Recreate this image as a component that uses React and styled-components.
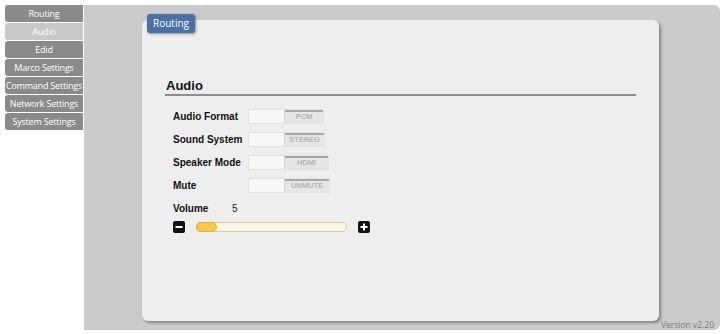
import React from 'react';
import styled, { createGlobalStyle } from 'styled-components';

const Global = createGlobalStyle`
  html, body { margin: 0; padding: 0; background: #ffffff; }
  body { font-family: "Liberation Sans", Arial, sans-serif; }
`;

const Page = styled.div`
  width: 725px;
  height: 334px;
  display: flex;
  align-items: flex-start;
  padding: 5px 0 0 5px;
  box-sizing: border-box;
`;

const Menu = styled.div`
  width: 78px;
  display: flex;
  flex-direction: column;
  gap: 1px;
`;

const MenuItem = styled.div`
  height: 17px;
  line-height: 17px;
  text-align: center;
  font-family: "Open Sans", "DejaVu Sans", sans-serif;
  font-size: 9px;
  color: #ffffff;
  background: ${p => (p.active ? '#c9c9c9' : '#8a8a8a')};
  border-radius: 3px 0 0 3px;
  white-space: nowrap;
  overflow: hidden;
  letter-spacing: -0.2px;
`;

const Stage = styled.div`
  margin-left: 1px;
  width: 636px;
  height: 325px;
  background: #cbcbcb;
  border-radius: 0 6px 6px 0;
  padding: 15px 0 0 58px;
  box-sizing: border-box;
  display: flex;
  flex-direction: column;
  position: relative;
`;

const Panel = styled.div`
  width: 517px;
  height: 301px;
  background: #eeeeee;
  border-radius: 6px;
  box-shadow: 2px 2px 3px rgba(0, 0, 0, 0.35);
  position: relative;
  padding: 58px 23px 0 23px;
  box-sizing: border-box;
`;

const Tab = styled.div`
  position: absolute;
  left: 5px;
  top: -6px;
  height: 19px;
  padding: 0 6px;
  line-height: 18px;
  background: #4b70a6;
  color: #ffffff;
  font-family: "Open Sans", "DejaVu Sans", sans-serif;
  font-size: 10px;
  border-radius: 3px;
  box-shadow: 1px 1px 3px rgba(0, 0, 0, 0.4);
`;

const Heading = styled.div`
  font-weight: bold;
  font-size: 13px;
  color: #111;
  padding-bottom: 1px;
  padding-left: 1px;
  border-bottom: 2px solid #8e8e8e;
`;

const Rows = styled.div`
  margin-top: 13px;
  margin-left: 8px;
  display: flex;
  flex-direction: column;
  gap: 9px;
`;

const Row = styled.div`
  display: flex;
  align-items: center;
  height: 14px;
`;

const Label = styled.div`
  width: ${p => p.w || 75}px;
  font-weight: bold;
  font-size: 10px;
  color: #111;
  white-space: nowrap;
`;

const Toggle = styled.div`
  display: flex;
  width: ${p => p.w}px;
  height: 13px;
  border: 1px solid #e3e3e3;
  background: #f7f7f7;
`;

const ToggleBlank = styled.div`
  width: 35px;
  border-right: 1px solid #d6d6d6;
`;

const ToggleValue = styled.div`
  flex: 1;
  background: #e6e6e6;
  border-top: 2px solid #a8a8a8;
  box-sizing: border-box;
  color: #b5b5b5;
  font-weight: bold;
  font-size: 7.5px;
  line-height: 10px;
  text-align: center;
`;

const VolumeRow = styled.div`
  display: flex;
  align-items: center;
  font-size: 10px;
  color: #111;
  margin-top: 2px;
`;

const VolValue = styled.span`
  color: #222;
`;

const SliderRow = styled.div`
  display: flex;
  align-items: center;
  margin-top: 7px;
  margin-left: 8px;
  gap: 11px;
`;

const IconBtn = styled.div`
  width: 12px;
  height: 12px;
  background: #111;
  border-radius: 2px;
  display: flex;
  align-items: center;
  justify-content: center;
`;

const Track = styled.div`
  width: 149px;
  height: 8px;
  border: 1px solid #d8c9a0;
  background: #fdf8e4;
  border-radius: 5px;
  position: relative;
`;

const Thumb = styled.div`
  position: absolute;
  left: -1px;
  top: -1px;
  width: 19px;
  height: 8px;
  background: #f8c84a;
  border: 1px solid #e3ad2e;
  border-radius: 5px;
`;

const Version = styled.div`
  position: absolute;
  right: 6px;
  bottom: 0px;
  font-family: "Open Sans", "DejaVu Sans", sans-serif;
  font-size: 8.5px;
  color: #7a7a7a;
`;

const menu = ['Routing', 'Audio', 'Edid', 'Marco Settings', 'Command Settings', 'Network Settings', 'System Settings'];

const rows = [
  { label: 'Audio Format', value: 'PCM', w: 74 },
  { label: 'Sound System', value: 'STEREO', w: 75 },
  { label: 'Speaker Mode', value: 'HDMI', w: 79 },
  { label: 'Mute', value: 'UNMUTE', w: 80 },
];

const App = () => {
  return (
    <>
      <Global />
      <Page>
        <Menu>
          {menu.map(m => (
            <MenuItem key={m} active={m === 'Audio'}>{m}</MenuItem>
          ))}
        </Menu>
        <Stage>
          <Panel>
            <Tab>Routing</Tab>
            <Heading>Audio</Heading>
            <Rows>
              {rows.map(r => (
                <Row key={r.label}>
                  <Label>{r.label}</Label>
                  <Toggle w={r.w}>
                    <ToggleBlank />
                    <ToggleValue>{r.value}</ToggleValue>
                  </Toggle>
                </Row>
              ))}
              <VolumeRow>
                <Label w={59}>Volume</Label>
                <VolValue>5</VolValue>
              </VolumeRow>
            </Rows>
            <SliderRow>
              <IconBtn>
                <svg width="8" height="8" viewBox="0 0 8 8">
                  <rect x="0.5" y="3" width="7" height="2" fill="#fff" />
                </svg>
              </IconBtn>
              <Track>
                <Thumb />
              </Track>
              <IconBtn>
                <svg width="8" height="8" viewBox="0 0 8 8">
                  <rect x="0.5" y="3" width="7" height="2" fill="#fff" />
                  <rect x="3" y="0.5" width="2" height="7" fill="#fff" />
                </svg>
              </IconBtn>
            </SliderRow>
          </Panel>
          <Version>Version v2.20</Version>
        </Stage>
      </Page>
    </>
  );
};

export default App;
